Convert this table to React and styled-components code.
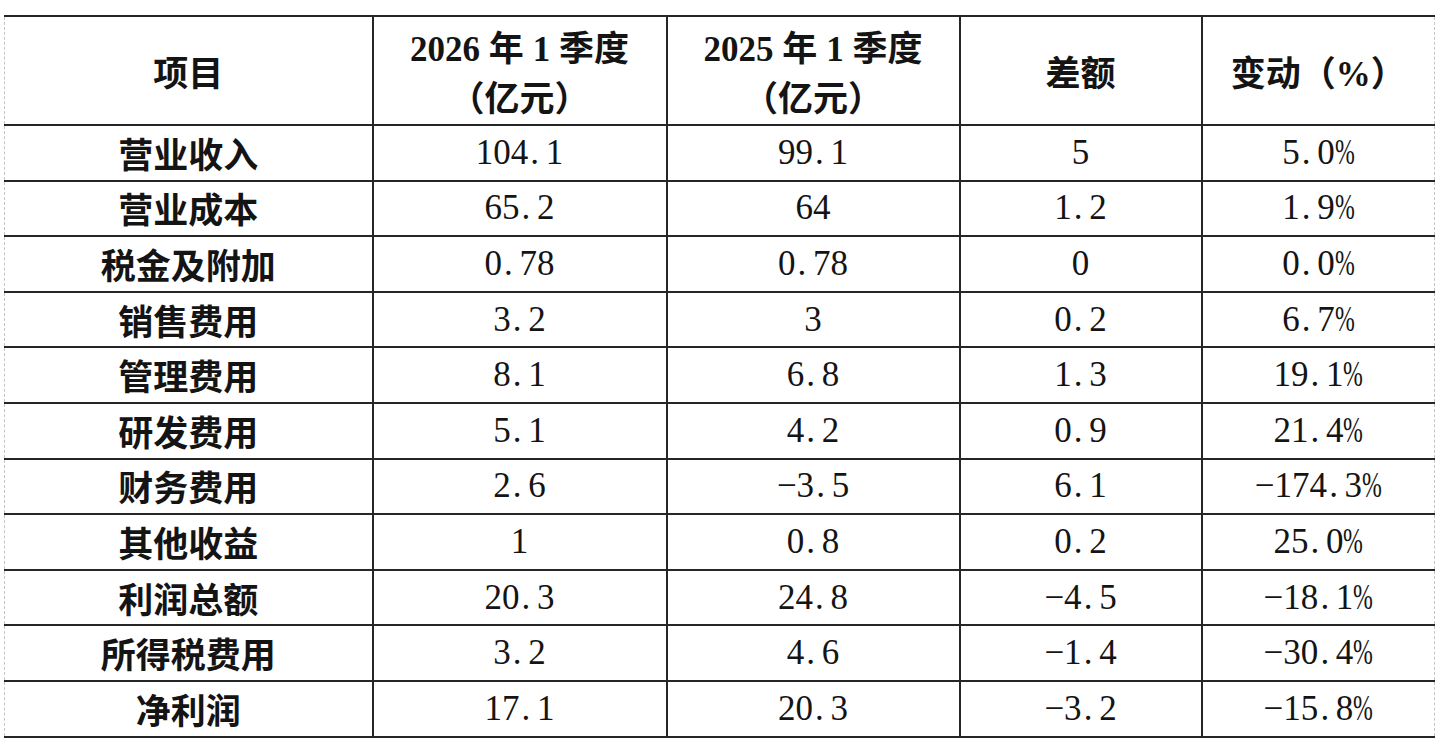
import React from 'react'
import styled, { createGlobalStyle } from 'styled-components'

const GlobalStyle = createGlobalStyle`
  html, body {
    margin: 0;
    padding: 0;
    background: #ffffff;
  }
  body {
    font-family: "Liberation Serif", "Noto Sans CJK SC", serif;
    color: #151515;
  }
`

const Page = styled.div`
  width: 1439px;
  height: 755px;
  padding: 15px 0 0 4px;
  box-sizing: border-box;
  background: #fff;
  overflow: hidden;
`

const Table = styled.table`
  border-collapse: collapse;
  table-layout: fixed;
  width: 1430px;
  border-top: 2px solid #262626;
  border-bottom: 2px solid #262626;
  border-left: 1px dashed #c4c4c4;
  border-right: 1px dashed #c4c4c4;
`

const Cell = styled.td`
  height: ${p => (p.$head ? '107px' : '53.6px')};
  padding: 0;
  text-align: center;
  vertical-align: middle;
  font-size: 35px;
  line-height: ${p => (p.$head ? '50px' : '36px')};
  font-weight: ${p => (p.$bold ? 700 : 400)};
  border-top: 2px solid #262626;
  border-bottom: 2px solid #262626;
  border-left: ${p => (p.$first ? '1px dashed #c4c4c4' : '2px solid #262626')};
  border-right: ${p => (p.$last ? '1px dashed #c4c4c4' : '2px solid #262626')};
  color: #141414;
  overflow: hidden;
`

const Line = styled.div`
  height: ${p => p.$h || '50px'};
  line-height: ${p => p.$h || '50px'};
  white-space: nowrap;
`

const Label = styled.span`
  font-family: "Noto Sans CJK SC", sans-serif;
  font-weight: 700;
`

const Dot = styled.span`
  display: inline-block;
  width: 0.5em;
  text-align: left;
  padding-left: 0.06em;
  box-sizing: border-box;
`

const Pct = styled.span`
  display: inline-block;
  width: 0.56em;
  transform: scaleX(0.68);
  transform-origin: left center;
  text-align: left;
`

const Cjk = styled.span`
  font-family: "Noto Sans CJK SC", sans-serif;
  font-weight: 700;
`

const cols = [368, 294, 293, 242, 233]

const rows = [
  ['营业收入', '104.1', '99.1', '5', '5.0%'],
  ['营业成本', '65.2', '64', '1.2', '1.9%'],
  ['税金及附加', '0.78', '0.78', '0', '0.0%'],
  ['销售费用', '3.2', '3', '0.2', '6.7%'],
  ['管理费用', '8.1', '6.8', '1.3', '19.1%'],
  ['研发费用', '5.1', '4.2', '0.9', '21.4%'],
  ['财务费用', '2.6', '−3.5', '6.1', '−174.3%'],
  ['其他收益', '1', '0.8', '0.2', '25.0%'],
  ['利润总额', '20.3', '24.8', '−4.5', '−18.1%'],
  ['所得税费用', '3.2', '4.6', '−1.4', '−30.4%'],
  ['净利润', '17.1', '20.3', '−3.2', '−15.8%'],
]

// SimSun-style half width dots and percent signs
function Num({ value }) {
  const parts = []
  let buf = ''
  value.split('').forEach((ch, i) => {
    if (ch === '.' || ch === '%') {
      if (buf) parts.push(buf)
      buf = ''
      parts.push(ch === '.' ? <Dot key={i}>.</Dot> : <Pct key={i}>%</Pct>)
    } else {
      buf += ch
    }
  })
  if (buf) parts.push(buf)
  return <Line $h="36px">{parts}</Line>
}

function PeriodHead({ year }) {
  return (
    <>
      <Line>
        <b>{year}</b> <Cjk>年</Cjk> <b>1</b> <Cjk>季度</Cjk>
      </Line>
      <Line>
        <Cjk>（亿元）</Cjk>
      </Line>
    </>
  )
}

export default function App() {
  return (
    <Page>
      <GlobalStyle />
      <Table>
        <colgroup>
          {cols.map((w, i) => (
            <col key={i} style={{ width: w }} />
          ))}
        </colgroup>
        <tbody>
          <tr>
            <Cell as="th" $head $bold $first>
              <Line><Label>项目</Label></Line>
            </Cell>
            <Cell as="th" $head $bold>
              <PeriodHead year="2026" />
            </Cell>
            <Cell as="th" $head $bold>
              <PeriodHead year="2025" />
            </Cell>
            <Cell as="th" $head $bold>
              <Line><Label>差额</Label></Line>
            </Cell>
            <Cell as="th" $head $bold $last>
              <Line>
                <Label>变动（<b style={{ fontFamily: 'Liberation Serif' }}>%</b>）</Label>
              </Line>
            </Cell>
          </tr>
          {rows.map(r => (
            <tr key={r[0]}>
              <Cell $first>
                <Line $h="36px"><Label>{r[0]}</Label></Line>
              </Cell>
              <Cell><Num value={r[1]} /></Cell>
              <Cell><Num value={r[2]} /></Cell>
              <Cell><Num value={r[3]} /></Cell>
              <Cell $last><Num value={r[4]} /></Cell>
            </tr>
          ))}
        </tbody>
      </Table>
    </Page>
  )
}
